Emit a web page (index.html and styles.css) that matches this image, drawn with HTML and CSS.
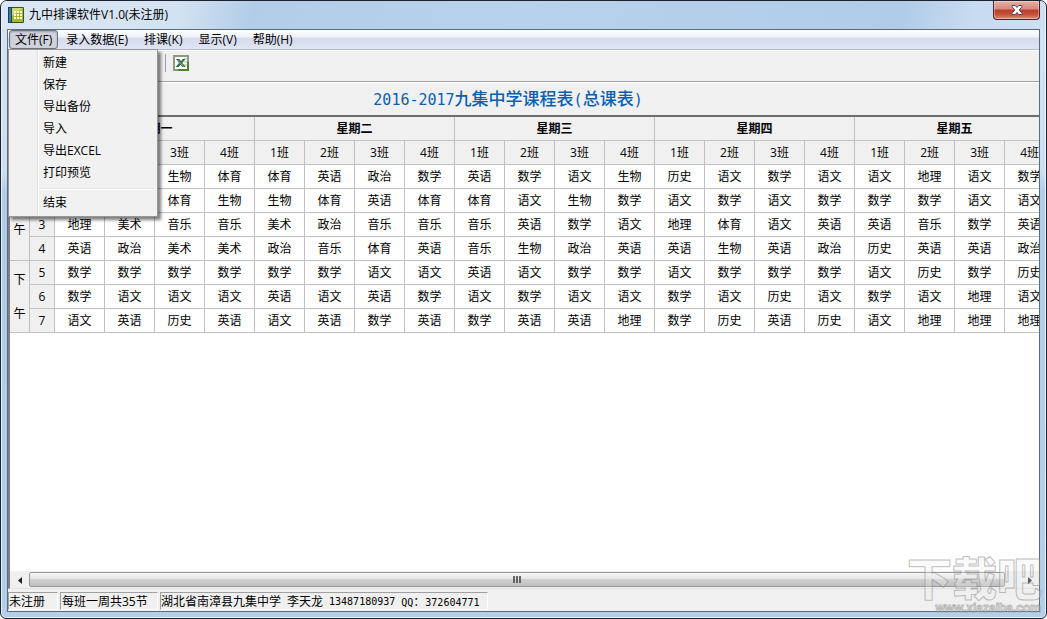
FILE: index.html
```html
<!DOCTYPE html>
<html lang="zh-CN">
<head>
<meta charset="utf-8">
<title>九中排课软件V1.0(未注册)</title>
<link rel="stylesheet" href="styles.css">
</head>
<body>
<div class="window">
  <header class="titlebar">
    <svg class="app-icon" width="16" height="16" viewBox="0 0 16 16" aria-hidden="true">
      <rect x="0" y="0" width="16" height="16" rx="1" fill="#39551f"/>
      <rect x="0" y="0" width="5" height="16" fill="#17405f"/>
      <rect x="1" y="1" width="2" height="14" fill="#3d7c9c"/>
      <rect x="4" y="1" width="11" height="14" fill="#a5b92c"/>
      <path d="M4 1h11L4 9z" fill="#cfdc6c"/>
      <path d="M6 4h2v2H6zM9 4h2v2H9zM12 4h2v2h-2zM6 7h2v2H6zM9 7h2v2H9zM12 7h2v2h-2zM6 10h2v2H6zM9 10h2v2H9zM12 10h2v2h-2z" fill="#fffde8"/>
    </svg>
    <h1 class="app-title">九中排课软件V1.0(未注册)</h1>
    <button class="close" type="button" aria-label="关闭">
      <svg width="12" height="10" viewBox="0 0 12 10"><path d="M1 .5h3.300L6 2.500 7.700.5H11v1.200L8.300 5 11 8.300v1.200H7.700L6 7.500l-1.700 2H1V8.300L3.700 5 1 1.700z" fill="#fff" stroke="#5b4148" stroke-width="1"/></svg>
    </button>
  </header>

  <div class="client">
    <nav class="menubar">
      <button class="menu-item open" type="button">文件(F)</button>
      <button class="menu-item" type="button">录入数据(E)</button>
      <button class="menu-item" type="button">排课(K)</button>
      <button class="menu-item" type="button">显示(V)</button>
      <button class="menu-item" type="button">帮助(H)</button>
      <div class="popup">
        <button type="button">新建</button>
        <button type="button">保存</button>
        <button type="button">导出备份</button>
        <button type="button">导入</button>
        <button type="button">导出EXCEL</button>
        <button type="button">打印预览</button>
        <hr>
        <button type="button">结束</button>
      </div>
    </nav>

    <div class="toolbar">
      <span class="separator"></span>
      <button class="tool" type="button" aria-label="导出EXCEL">
        <svg width="16" height="16" viewBox="0 0 16 16">
          <rect x="1" y="1" width="14" height="14" fill="#fff" stroke="#8b9a80" stroke-width="2"/>
          <path d="M15 7v8H5" fill="none" stroke="#4a8426" stroke-width="2"/>
          <path d="M11 4h3M11 7h3M11 10h3" stroke="#a3b79b"/>
          <path d="M3 4h3.500L8 6.300 9.800 4H12.500L9.300 8l3.500 4H9.300L7.500 9.700 5.700 12H2.500L6 8z" fill="#356b45"/>
          <path d="M4.500 5l6 6.500" stroke="#9bb8a1"/>
        </svg>
      </button>
    </div>

    <h2 class="caption"><span class="num">2016-2017</span>九集中学课程表<span class="num">(</span>总课表<span class="num">)</span></h2>

    <main class="grid">
      <div class="viewport">
      <table>
        <colgroup><col class="c-part"><col class="c-no"><col span="20" class="c-day"></colgroup>
        <thead>
          <tr class="days"><th></th><th></th><th colspan="4">星期一</th><th colspan="4">星期二</th><th colspan="4">星期三</th><th colspan="4">星期四</th><th colspan="4">星期五</th></tr>
          <tr><th></th><th></th><th></th><th></th><th>3班</th><th>4班</th><th>1班</th><th>2班</th><th>3班</th><th>4班</th><th>1班</th><th>2班</th><th>3班</th><th>4班</th><th>1班</th><th>2班</th><th>3班</th><th>4班</th><th>1班</th><th>2班</th><th>3班</th><th>4班</th></tr>
        </thead>
        <tbody>
          <tr><th rowspan="4" class="part">上<br>午</th><th></th><td></td><td></td><td>生物</td><td>体育</td><td>体育</td><td>英语</td><td>政治</td><td>数学</td><td>英语</td><td>数学</td><td>语文</td><td>生物</td><td>历史</td><td>语文</td><td>数学</td><td>语文</td><td>语文</td><td>地理</td><td>语文</td><td>数学</td></tr>
          <tr><th></th><td></td><td></td><td>体育</td><td>生物</td><td>生物</td><td>体育</td><td>英语</td><td>体育</td><td>体育</td><td>语文</td><td>生物</td><td>数学</td><td>语文</td><td>数学</td><td>语文</td><td>数学</td><td>数学</td><td>数学</td><td>语文</td><td>语文</td></tr>
          <tr><th>3</th><td>地理</td><td>美术</td><td>音乐</td><td>音乐</td><td>美术</td><td>政治</td><td>音乐</td><td>音乐</td><td>音乐</td><td>英语</td><td>数学</td><td>语文</td><td>地理</td><td>体育</td><td>语文</td><td>英语</td><td>英语</td><td>音乐</td><td>数学</td><td>英语</td></tr>
          <tr><th>4</th><td>英语</td><td>政治</td><td>美术</td><td>美术</td><td>政治</td><td>音乐</td><td>体育</td><td>英语</td><td>音乐</td><td>生物</td><td>政治</td><td>英语</td><td>英语</td><td>生物</td><td>英语</td><td>政治</td><td>历史</td><td>英语</td><td>英语</td><td>政治</td></tr>
          <tr><th rowspan="3" class="part">下<br>午</th><th>5</th><td>数学</td><td>数学</td><td>数学</td><td>数学</td><td>数学</td><td>数学</td><td>语文</td><td>语文</td><td>英语</td><td>语文</td><td>数学</td><td>数学</td><td>语文</td><td>数学</td><td>数学</td><td>数学</td><td>语文</td><td>历史</td><td>数学</td><td>历史</td></tr>
          <tr><th>6</th><td>数学</td><td>语文</td><td>语文</td><td>语文</td><td>英语</td><td>语文</td><td>英语</td><td>数学</td><td>语文</td><td>数学</td><td>语文</td><td>语文</td><td>数学</td><td>语文</td><td>历史</td><td>语文</td><td>数学</td><td>语文</td><td>地理</td><td>语文</td></tr>
          <tr><th>7</th><td>语文</td><td>英语</td><td>历史</td><td>英语</td><td>语文</td><td>英语</td><td>数学</td><td>英语</td><td>数学</td><td>英语</td><td>英语</td><td>地理</td><td>数学</td><td>历史</td><td>英语</td><td>历史</td><td>语文</td><td>地理</td><td>地理</td><td>地理</td></tr>
        </tbody>
      </table>
      </div>
      <div class="scrollbar">
        <button type="button" class="arrow" aria-label="向左"><svg width="4" height="7" viewBox="0 0 4 7"><path d="M4 0v7L0 3.500z" fill="#222"/></svg></button>
        <div class="track"><div class="thumb"><i></i><i></i><i></i></div></div>
        <button type="button" class="arrow" aria-label="向右"><svg width="4" height="7" viewBox="0 0 4 7"><path d="M0 0v7l4-3.500z" fill="#222"/></svg></button>
      </div>
    </main>

    <footer class="statusbar">
      <span class="panel state">未注册</span>
      <span class="panel total">每班一周共35节</span>
      <span class="panel contact"><span>湖北省南漳县九集中学</span><span>李天龙</span><span class="digits">13487180937</span><span><span class="digits">QQ</span>：<span class="digits">372604771</span></span></span>
    </footer>
  </div>

  <div class="watermark"><b>下载吧</b><span>www.xiazaiba.com</span></div>
</div>
</body>
</html>
```

FILE: styles.css
```css
* { box-sizing: border-box; }

body {
  margin: 0;
  background: #fff;
  color: #000;
  font: 12px/16px "Open Sans", "Noto Sans CJK SC", sans-serif;
}

button {
  margin: 0;
  padding: 0;
  border: 0;
  background: none;
  color: inherit;
  font: inherit;
}

.window {
  position: relative;
  display: flex;
  flex-direction: column;
  height: 100vh;
  padding: 0 6px 6px;
  border: 1px solid #1b2330;
  border-radius: 7px 7px 6px 6px;
  background: linear-gradient(#d3e3f4 0, #cfdff1 170px, #b2cde9 190px, #b4cfea 100%);
  box-shadow: inset 0 0 0 1px #e8f2fb;
  overflow: hidden;
}

.titlebar {
  display: flex;
  align-items: center;
  gap: 5px;
  flex: none;
  height: 28px;
  margin: 0 -5px;
  padding: 0 5px 0 6px;
  background: linear-gradient(100deg, #dbe7f4 0, #d3e2f2 17%, #b3cde8 24%, #b9d2ec 50%, #b0cce9 86%, #c9dbf0 93%, #cddff2 100%);
}

.app-title {
  flex: 1;
  margin: 0;
  font-size: 12px;
  font-weight: 400;
}

.close {
  display: flex;
  align-items: center;
  justify-content: center;
  align-self: flex-start;
  width: 47px;
  height: 19px;
  border: 1px solid #54202a;
  border-top: 0;
  border-radius: 0 0 4px 4px;
  background: linear-gradient(#e6b0a6 0, #d5897d 45%, #bb3a26 50%, #c4513b 75%, #dd9080 100%);
  box-shadow: inset 0 0 0 1px rgba(255, 255, 255, .35);
}

.client {
  display: flex;
  flex-direction: column;
  flex: 1;
  min-height: 0;
  border: 1px solid #5d6c7c;
  background: #f0f0f0;
}

.menubar {
  position: relative;
  display: flex;
  flex: none;
  height: 20px;
  border-bottom: 1px solid #b6bccc;
  background: linear-gradient(#fff 0, #eef1f8 38%, #d5dbed 42%, #dfe5f4 100%);
}

.menu-item {
  display: flex;
  align-items: center;
  height: 19px;
  padding: 0 8px;
  white-space: nowrap;
}

.menu-item.open {
  margin-left: 1px;
  padding: 0 5px;
  border: 1px solid #6f7178;
  border-radius: 3px;
  background: #d0d3de;
  box-shadow: inset 0 1px 2px #9fa3ae;
}

.popup {
  position: absolute;
  z-index: 2;
  top: 19px;
  left: 0;
  display: flex;
  flex-direction: column;
  width: 150px;
  padding: 2px 3px 2px;
  border: 1px solid #979797;
  background: linear-gradient(90deg, #f1f1f1 28px, #e0e0e0 28px, #e0e0e0 29px, #fff 29px, #fff 30px, #f1f1f1 30px);
  box-shadow: 3px 3px 3px rgba(0, 0, 0, .5);
}

.popup button {
  height: 22px;
  padding-left: 31px;
  text-align: left;
}

.popup hr {
  width: calc(100% - 27px);
  height: 2px;
  margin: 4px 0 2px 27px;
  border: 0;
  border-top: 1px solid #e0e0e0;
  background: #fff;
}

.toolbar {
  display: flex;
  align-items: center;
  gap: 7px;
  flex: none;
  height: 32px;
  padding: 0 0 7px 157px;
  border-top: 1px solid #fff;
  border-bottom: 1px solid #a0a0a0;
}

.separator {
  width: 1px;
  height: 18px;
  background: #a0a0a0;
}

.tool, .tool svg { display: block; }

.caption {
  flex: none;
  margin: 0;
  height: 33px;
  border-top: 1px solid #fff;
  color: #0a5fb0;
  font-size: 17px;
  font-weight: 500;
  line-height: 32px;
  text-align: center;
  padding-right: 31px;
}

.num {
  font-family: "DejaVu Sans Mono", "Liberation Mono", monospace;
  font-size: 15px;
}

.grid {
  display: flex;
  flex-direction: column;
  flex: 1;
  min-height: 0;
  border-top: 2px solid #6e6e6e;
  border-left: 2px solid #808080;
  border-bottom: 1px solid #e3e3e3;
  background: #fff;
}

.viewport {
  flex: 1;
  min-height: 0;
  overflow: hidden;
}

table {
  width: 1045px;
  table-layout: fixed;
  border-spacing: 0;
}

.c-part { width: 20px; }
.c-no { width: 25px; }
.c-day { width: 50px; }

th, td {
  height: 24px;
  padding: 0;
  border-right: 1px solid #c0c0c0;
  border-bottom: 1px solid #c0c0c0;
  font-weight: 400;
  line-height: 16px;
  text-align: center;
  white-space: nowrap;
}

th { background: #f0f0f0; }
.days th { font-weight: 700; }
.part { line-height: 34px; }

.scrollbar {
  display: flex;
  flex: none;
  height: 17px;
  padding-top: 1px;
  background: #f0f0f0;
}

.arrow {
  display: flex;
  align-items: center;
  justify-content: center;
  width: 19px;
}

.track {
  flex: 1;
  padding-right: 15px;
}

.thumb {
  display: flex;
  align-items: center;
  justify-content: center;
  gap: 1px;
  height: 15px;
  border: 1px solid #979797;
  border-radius: 2px;
  background: linear-gradient(#f5f5f5 0, #e6e6e6 45%, #d0d0d0 50%, #bfbfc2 100%);
}

.thumb i {
  width: 2px;
  height: 7px;
  background: #666;
}

.statusbar {
  display: flex;
  gap: 2px;
  flex: none;
  height: 22px;
  padding: 3px 0 1px;
}

.panel {
  border: 1px solid #fff;
  border-top-color: #a0a0a0;
  border-left-color: #a0a0a0;
  line-height: 18px;
  white-space: nowrap;
}

.state { width: 50px; }
.total { width: 98px; padding-left: 1px; }

.contact {
  display: flex;
  gap: 6px;
  min-width: 328px;
  padding-right: 7px;
}

.digits {
  font-family: "DejaVu Sans Mono", "Liberation Mono", monospace;
  font-size: 10px;
}

.watermark {
  position: absolute;
  z-index: 3;
  right: 5px;
  bottom: 4px;
  width: 134px;
  color: rgba(240, 240, 240, .3);
  text-align: right;
  -webkit-text-stroke: 1px rgba(130, 130, 130, .5);
  pointer-events: none;
}

.watermark b {
  display: block;
  font-size: 45px;
  font-weight: 900;
  line-height: 46px;
  white-space: nowrap;
}

.watermark span {
  display: block;
  font: 700 12px/12px "Liberation Sans", sans-serif;
}
```
